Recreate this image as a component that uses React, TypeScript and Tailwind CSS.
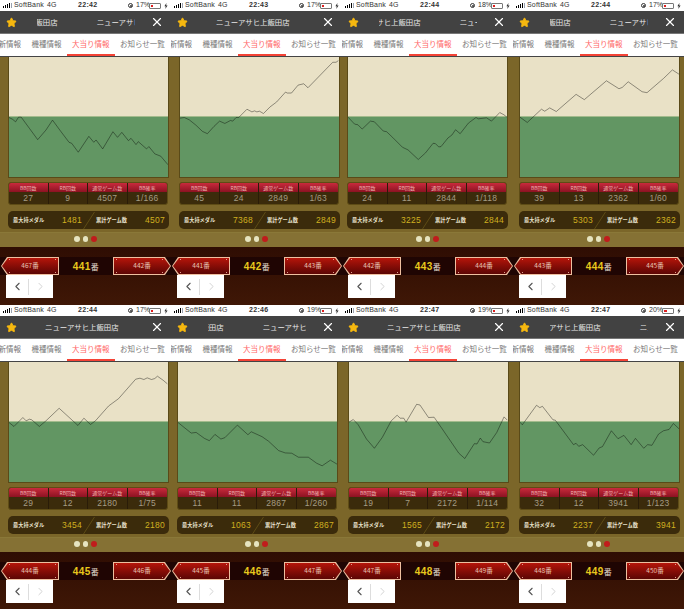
import { ChevronLeft, ChevronRight, Star, X } from "lucide-react";

type Tile = {
  time: string; battery: string; batteryFill: string; titleShift: string; inset: string;
  left: number; points: string;
  bb: string; rb: string; games: string; rate: string; medals: string;
  prev: string; cur: string; next: string;
};

const TITLE = "ニューアサヒ上飯田店";
const TABS = ["最新情報", "機種情報", "大当り情報", "お知らせ一覧", "最新情報"];
const LABELS = ["BB回数", "RB回数", "通常ゲーム数", "BB確率"];

const tiles: Tile[] = [
  { time: "22:42", battery: "17%", batteryFill: "w-[2px]", titleShift: "ml-[-53px]", inset: "pl-[8px]", left: 23,
    points: "23,205 33,210 43,218 52,204 60,204 85,238 110,272 135,243 155,213 180,247 205,280 213,283 233,310 265,262 280,280 287,273 307,300 338,248 352,265 365,250 385,275 393,268 408,287 415,278 440,300 447,293 465,315 483,322 505,348",
    bb: "27", rb: "9", games: "4507", rate: "1/166", medals: "1481", prev: "467", cur: "441", next: "442" },
  { time: "22:43", battery: "17%", batteryFill: "w-[2px]", titleShift: "ml-[8px]", inset: "pl-[8px]", left: 537,
    points: "537,207 550,205 565,212 585,228 605,247 620,254 640,232 657,216 673,223 690,214 697,216 707,205 715,205 740,180 755,188 763,185 770,188 778,186 790,193 810,173 830,158 857,128 862,131 875,131 895,107 912,103 925,115 1000,38 1010,38 1017,33",
    bb: "45", rb: "24", games: "2849", rate: "1/63", medals: "7368", prev: "441", cur: "442", next: "443" },
  { time: "22:44", battery: "18%", batteryFill: "w-[2px]", titleShift: "ml-[-32px]", inset: "pl-[5px]", left: 15,
    points: "15,204 35,225 45,227 58,240 83,216 95,218 122,246 132,248 150,265 180,295 197,303 228,332 250,312 273,283 280,284 290,294 297,293 318,267 330,258 341,242 355,254 380,222 403,205 410,209 435,206 450,216 475,190 490,198 497,205",
    bb: "24", rb: "11", games: "2844", rate: "1/118", medals: "3225", prev: "442", cur: "443", next: "444" },
  { time: "22:44", battery: "17%", batteryFill: "w-[2px]", titleShift: "ml-[-53px]", inset: "pl-[6px]", left: 530,
    points: "530,204 552,220 595,180 605,186 620,176 640,187 700,135 725,151 792,94 830,118 840,114 858,97 900,127 915,130 965,87 992,61 1012,74",
    bb: "39", rb: "13", games: "2362", rate: "1/60", medals: "5303", prev: "443", cur: "444", next: "445" },
  { time: "22:44", battery: "17%", batteryFill: "w-[2px]", titleShift: "ml-[8px]", inset: "pl-[8px]", left: 23,
    points: "23,205 38,217 65,190 75,200 85,195 92,197 115,217 135,200 175,162 232,214 250,192 270,211 285,200 325,155 355,133 407,74 420,71 432,75 442,70 455,75 465,72 473,65 490,77 503,88",
    bb: "29", rb: "12", games: "2180", rate: "1/75", medals: "3454", prev: "444", cur: "445", next: "446" },
  { time: "22:46", battery: "19%", batteryFill: "w-[2px]", titleShift: "ml-[-58px]", inset: "pl-[6px]", left: 530,
    points: "530,205 570,237 585,235 610,253 625,260 642,241 660,255 672,251 710,213 742,242 752,233 785,248 805,262 835,290 855,297 875,298 895,310 925,310 950,328 967,336 992,319 1012,331",
    bb: "11", rb: "11", games: "2867", rate: "1/260", medals: "1063", prev: "445", cur: "446", next: "447" },
  { time: "22:47", battery: "19%", batteryFill: "w-[2px]", titleShift: "ml-[8px]", inset: "pl-[6px]", left: 17,
    points: "17,204 30,196 45,212 70,255 94,283 118,250 145,200 163,183 172,192 183,192 190,204 222,150 232,152 258,190 275,189 300,225 350,298 368,314 397,269 405,270 415,252 423,263 443,267 465,235 487,188 497,198",
    bb: "19", rb: "7", games: "2172", rate: "1/114", medals: "1565", prev: "447", cur: "448", next: "449" },
  { time: "22:47", battery: "20%", batteryFill: "w-[3px]", titleShift: "ml-[-23px]", inset: "pl-[6px]", left: 530,
    points: "530,204 537,212 580,153 590,160 598,156 630,197 637,198 692,272 700,268 708,277 720,272 753,304 770,282 780,278 807,230 827,254 845,244 867,272 880,253 905,283 917,272 930,274 950,240 965,230 982,226 995,208 1012,224",
    bb: "32", rb: "12", games: "3941", rate: "1/123", medals: "2237", prev: "448", cur: "449", next: "450" },
];

function StatusBar({ t }: { t: Tile }) {
  return (
    <div className="flex h-[11px] items-center whitespace-nowrap bg-white pl-[3px] font-['Liberation_Sans',sans-serif] text-[7px] text-[#333]">
      <div className="flex h-[5px] w-[10px] shrink-0 items-end gap-[1px]">
        <i className="h-[2px] w-[1px] bg-black" />
        <i className="h-[3px] w-[1px] bg-black" />
        <i className="h-[4px] w-[1px] bg-black" />
        <i className="h-[5px] w-[1px] bg-black" />
        <i className="h-[5px] w-[1px] bg-gray-400" />
      </div>
      <span className="ml-[1px] w-[33px] shrink-0 tracking-[0.2px]">SoftBank</span>
      <span className="w-[9px] shrink-0">4G</span>
      <span className="ml-[22px] w-[20px] shrink-0 font-bold tracking-[0.3px]">{t.time}</span>
      <span className="ml-[30px] flex h-[5px] w-[5px] shrink-0 items-center justify-center rounded-full border border-[#333]">
        <i className="h-[2px] w-[2px] rounded-full bg-[#333]" />
      </span>
      <span className="ml-[3px] w-[13px] shrink-0">{t.battery}</span>
      <span className="flex h-[6px] w-[12px] shrink-0 items-center rounded-[1px] border border-[#777] p-[1px]">
        <i className={`h-full bg-[#e02020] ${t.batteryFill}`} />
      </span>
      <svg width="4" height="6" viewBox="0 0 4 6" className="ml-[3px] shrink-0">
        <polygon points="2.4,0 0.4,3.3 1.7,3.3 1.3,6 3.6,2.5 2.2,2.5" fill="#333" />
      </svg>
    </div>
  );
}

function Header({ t }: { t: Tile }) {
  return (
    <div className="flex h-[23px] items-center border-b border-[#777] bg-[#424242]">
      <Star size={11} className="ml-[6px] shrink-0 fill-[#f6b80f] text-[#f6b80f]" />
      <div className="ml-[20px] w-[98px] shrink-0 overflow-hidden">
        <div className={`flex w-max gap-[39px] whitespace-nowrap font-['Noto_Sans_CJK_JP',sans-serif] text-[7.4px] text-[#e8e8e8] ${t.titleShift}`}>
          <span>{TITLE}</span>
          <span>{TITLE}</span>
        </div>
      </div>
      <X size={14} strokeWidth={2} className="ml-[15px] shrink-0 text-white" />
    </div>
  );
}

function Tabs() {
  return (
    <div className="flex h-[23px] overflow-hidden border-b border-[#444] bg-white font-['Noto_Sans_CJK_JP',sans-serif] text-[7.5px]">
      <div className="ml-[-14.25px] flex w-max shrink-0">
        {TABS.map((tab, i) => (
          <span
            key={i}
            className={`flex h-[22px] shrink-0 items-center whitespace-nowrap border-b-2 px-[5.25px] ${i === 2 ? "border-[#f44336] text-[#f66]" : "border-transparent text-[#777]"}`}
          >
            {tab}
          </span>
        ))}
      </div>
    </div>
  );
}

function Chart({ t }: { t: Tile }) {
  return (
    <div className="relative flex h-[121px] w-[161px] flex-col border-x border-b border-[#5a4a18]">
      <div className="h-[60px] border-b border-[#a3bb8c] bg-[#e9e1c6]" />
      <div className="flex-1 bg-[#629663]" />
      <svg viewBox={`${t.left} 22 482 363`} className="absolute inset-0 h-full w-full" preserveAspectRatio="none">
        <polyline points={t.points} fill="none" stroke="#000" strokeOpacity="0.5" strokeWidth="2.4" />
      </svg>
    </div>
  );
}

function Stats({ t }: { t: Tile }) {
  const values = [t.bb, t.rb, t.games, t.rate];
  return (
    <div className="mt-[4px] grid h-[23px] w-[160px] grid-cols-4 overflow-hidden rounded-[3px] border border-[#5e4c16] bg-[#3b2b0b]">
      {LABELS.map((label, i) => (
        <div key={label} className="flex flex-col border-r border-[#2a1c08] last:border-r-0">
          <div className="flex h-[9px] items-center justify-center whitespace-nowrap bg-gradient-to-b from-[#c92a3c] to-[#8c1222] font-['Noto_Sans_CJK_JP',sans-serif] text-[5px] text-[#f0b0b0]">
            {label}
          </div>
          <div className="flex flex-1 items-center justify-center font-['Liberation_Sans',sans-serif] text-[8.5px] tracking-[0.3px] text-[#a59c84]">
            {values[i]}
          </div>
        </div>
      ))}
    </div>
  );
}

function Totals({ t }: { t: Tile }) {
  return (
    <div className="mt-[6px] flex h-[18px] w-[161px] items-center whitespace-nowrap rounded-[5px] bg-[#3b2b0b] font-['Noto_Sans_CJK_JP',sans-serif] text-[5.2px] font-bold text-[#e6e0cc]">
      <span className="ml-[5px] w-[31px] shrink-0">最大持メダル</span>
      <span className="w-[38px] shrink-0 text-right font-['Liberation_Sans',sans-serif] text-[8.5px] font-normal tracking-[0.3px] text-[#d0b020]">{t.medals}</span>
      <svg width="12" height="18" className="ml-[1px] shrink-0">
        <line x1="0.5" y1="18" x2="11.5" y2="1" stroke="#5e4c16" />
      </svg>
      <span className="ml-[1px] w-[31px] shrink-0">累計ゲーム数</span>
      <span className="w-[38px] shrink-0 text-right font-['Liberation_Sans',sans-serif] text-[8.5px] font-normal tracking-[0.3px] text-[#d0b020]">{t.games}</span>
    </div>
  );
}

function Rivet({ pos }: { pos: string }) {
  return <i className={`absolute h-[1px] w-[1px] bg-[#e0a090] ${pos}`} />;
}

function NavButton({ label, dir }: { label: string; dir: "left" | "right" }) {
  const shape = dir === "left"
    ? "[clip-path:polygon(0_50%,6px_0,100%_0,100%_100%,6px_100%)]"
    : "[clip-path:polygon(0_0,calc(100%-6px)_0,100%_50%,calc(100%-6px)_100%,0_100%)]";
  return (
    <div className={`h-[18px] w-[58px] bg-[#eebfa0] p-[1px] ${shape}`}>
      <div className={`relative flex h-full items-center justify-center whitespace-nowrap bg-gradient-to-b from-[#b5150a] to-[#5c0604] font-['Noto_Sans_CJK_JP',sans-serif] text-[6.5px] text-[#e6c0b0] ${shape}`}>
        {label}番
        <Rivet pos={dir === "left" ? "left-[7px] top-[1px]" : "left-[2px] top-[1px]"} />
        <Rivet pos={dir === "left" ? "left-[7px] bottom-[1px]" : "left-[2px] bottom-[1px]"} />
        <Rivet pos={dir === "left" ? "right-[2px] top-[1px]" : "right-[7px] top-[1px]"} />
        <Rivet pos={dir === "left" ? "right-[2px] bottom-[1px]" : "right-[7px] bottom-[1px]"} />
      </div>
    </div>
  );
}

function Phone({ t, first }: { t: Tile; first: boolean }) {
  return (
    <div className={`flex w-[171px] flex-col overflow-hidden ${first ? "h-[305px]" : "h-[304px]"}`}>
      <StatusBar t={t} />
      <Header t={t} />
      <Tabs />
      <div className="flex h-[190px] flex-col bg-[#7b6629]">
        <div className={t.inset}>
          <Chart t={t} />
          <Stats t={t} />
          <Totals t={t} />
        </div>
        <div className="mt-[3px] flex flex-1 items-start justify-center gap-[3px] border-t border-[#8a7838] bg-[#857134] pt-[3px]">
          <i className="h-[5.5px] w-[5.5px] rounded-full bg-[#e6e4c0]" />
          <i className="h-[5.5px] w-[5.5px] rounded-full bg-[#e6e4c0]" />
          <i className="h-[5.5px] w-[5.5px] rounded-full bg-[#c01c1c]" />
        </div>
      </div>
      <div className="flex flex-1 flex-col bg-gradient-to-b from-[#2f0d03] to-[#3f1706] pt-[10px]">
        <div className="flex h-[18px] items-center justify-between bg-[#1f0503] pl-[1px]">
          <NavButton label={t.prev} dir="left" />
          <span className="whitespace-nowrap font-['Liberation_Sans',sans-serif] text-[10px] font-bold tracking-[0.4px] text-[#e8c81c]">
            {t.cur}
            <span className="font-['Noto_Sans_CJK_JP',sans-serif] text-[8px] font-normal text-[#e0d8c8]">番</span>
          </span>
          <NavButton label={t.next} dir="right" />
        </div>
        <div className="ml-[6px] flex h-[23px] w-[47px] items-center bg-white">
          <span className="flex h-[16px] w-[23px] items-center justify-center border-r border-[#ddd]">
            <ChevronLeft size={13} strokeWidth={2} className="text-[#555]" />
          </span>
          <span className="flex w-[23px] items-center justify-center">
            <ChevronRight size={13} strokeWidth={1.6} className="text-[#ccc]" />
          </span>
        </div>
      </div>
    </div>
  );
}

export default function App() {
  return (
    <div className="grid h-[609px] w-[684px] grid-cols-4 overflow-hidden bg-[#2a0c03]">
      {tiles.map((t, i) => (
        <Phone key={t.cur} t={t} first={i < 4} />
      ))}
    </div>
  );
}
